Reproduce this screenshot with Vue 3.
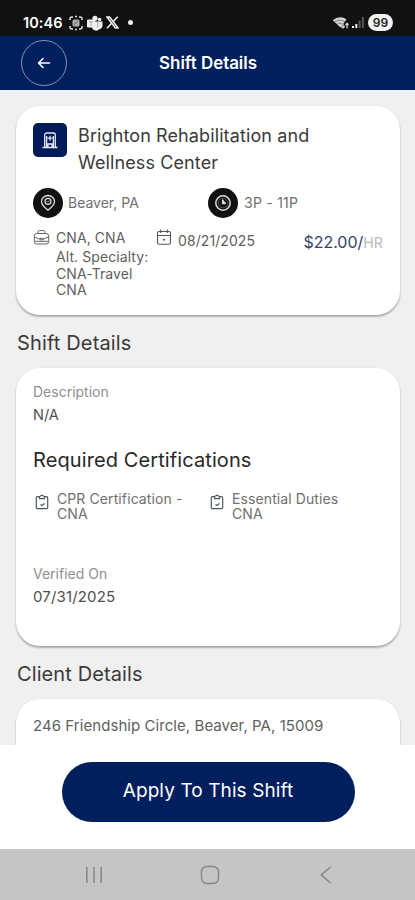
<script setup>
const certifications = [
  ['CPR Certification -', 'CNA'],
  ['Essential Duties', 'CNA']
]
</script>

<template>
  <div class="screen">
    <div class="status">
      <span class="time">10:46</span>
      <svg class="st-scan" width="16" height="16" viewBox="0 0 16 16" fill="none" stroke="#ddd" stroke-width="1.5">
        <path d="M2 5V4a2 2 0 0 1 2-2h1M11 2h1a2 2 0 0 1 2 2v1M14 11v1a2 2 0 0 1-2 2h-1M5 14H4a2 2 0 0 1-2-2v-1M7 1.5h2M7 14.5h2" />
        <rect x="4.5" y="4.5" width="7" height="7" rx="1.5" fill="#aaa" stroke="none" />
        <path d="M6.300 9.500 9.500 6.500" stroke="#555" stroke-width="1" />
      </svg>
      <svg class="st-teams" width="17" height="16" viewBox="0 0 17 16" fill="#eee">
        <circle cx="9" cy="3.300" r="2.600" /><circle cx="13.600" cy="4.500" r="1.800" />
        <path d="M6 6.500h10.500v4a4 4 0 0 1-3.200 3.800A4.500 4.500 0 0 1 6 13z" />
        <rect x="1" y="4.500" width="8" height="8" rx="1" />
        <path d="M3 6.800h4M5 6.800v4M11.600 7v5.500" stroke="#999" stroke-width=".8" />
      </svg>
      <svg class="st-x" width="13" height="13" viewBox="0 0 13 13" fill="none" stroke="#f2f2f2">
        <path d="M1 1h2.600L12 12H9.400z" stroke-width="1.500" /><path d="M11.700 .8 7.300 5.600M5.600 7.300 1 12.200" stroke-width="1.500" />
      </svg>
      <i class="st-dot"></i>
      <svg class="st-wifi" width="18" height="14" viewBox="0 0 18 14">
        <path d="M.8 4.300A12 12 0 0 1 14.500 3.200L8.500 11.500z" fill="#d5d5d5" />
        <path d="M3 5.600q5-3 9.500-.2M5.200 8.100q3-1.800 5.600 0" fill="none" stroke="#666" stroke-width=".8" />
        <path d="M11 12V7.500m-1.800 2.500 1.800 2 1.800-2M15 12.500V7.500m-1.500 1.500 1.500-1.700 1.500 1.700" fill="none" stroke="#ccc" stroke-width="1.300" />
      </svg>
      <svg class="st-signal" width="13" height="13" viewBox="0 0 13 13">
        <path d="M0 10h2v2H0zM3.300 8h2v4h-2z" fill="#eee" /><path d="M6.600 4.500h2V12h-2zM9.900 1h2v11h-2z" fill="#555" />
      </svg>
      <span class="battery">99</span>
    </div>

    <header class="bar">
      <div class="back">
        <svg width="14" height="12" viewBox="0 0 14 12" fill="none" stroke="#fff" stroke-width="1.600" stroke-linecap="round" stroke-linejoin="round"><path d="M12.500 6H1.700M6 1.500 1.500 6 6 10.500" /></svg>
      </div>
      <h1>Shift Details</h1>
    </header>

    <main class="content">
      <section class="card summary">
        <div class="facility">
          <div class="building">
            <svg width="18" height="18" viewBox="0 0 18 18" fill="none" stroke="#e6eaf5" stroke-width="1.300">
              <path d="M1.500 16.500h15M3.700 16V4a2 2 0 0 1 2-2h6.600a2 2 0 0 1 2 2v12M9 4.700v5M6.500 7.200h5M7 16v-3h4v3M5.600 5v11M12.400 5v11" />
            </svg>
          </div>
          <h2>Brighton Rehabilitation and<br />Wellness Center</h2>
        </div>
        <div class="facts">
          <div class="fact place">
            <div class="disc">
              <svg width="18" height="18" viewBox="0 0 18 18" fill="none" stroke="#ddd" stroke-width="1.300">
                <path d="M9 16.300C5.500 13.400 2.500 10.500 2.500 7.400a6.500 5.900 0 0 1 13 0C15.500 10.500 12.500 13.400 9 16.300z" /><circle cx="9" cy="7.300" r="3" /><path d="m7.700 7.200 1 1 1.700-1.800" stroke-width=".8" />
              </svg>
            </div>
            <span>Beaver, PA</span>
          </div>
          <div class="fact hours">
            <div class="disc">
              <svg width="18" height="18" viewBox="0 0 18 18" fill="none" stroke="#ddd" stroke-width="1.500"><circle cx="9" cy="9" r="7.200" /><circle cx="9" cy="9" r="4.800" stroke="#777" stroke-width=".6" /><path d="M8.700 5.500V9.500h3" /><path d="m9 6 3 3H9z" fill="#ddd" stroke="none" /></svg>
            </div>
            <span>3P - 11P</span>
          </div>
        </div>
        <div class="meta">
          <svg class="case" width="17" height="17" viewBox="0 0 17 17" fill="none" stroke="#666" stroke-width="1">
            <path d="M5 4.500V3.200A1.700 1.700 0 0 1 6.700 1.500h3.600A1.700 1.700 0 0 1 12 3.200v1.300" /><rect x="1.300" y="4.500" width="14.400" height="10.500" rx="2.400" /><path d="M1.500 8 7 10.200M15.500 8 10 10.200M7 9.300h3v1.500H7zM2 12.300h13" />
          </svg>
          <div class="spec">CNA, CNA<div class="alt">Alt. Specialty:<br />CNA-Travel<br />CNA</div></div>
          <svg class="cal" width="16" height="17" viewBox="0 0 16 17" fill="none" stroke="#555" stroke-width="1.100">
            <rect x="1.500" y="2.500" width="13" height="12.800" rx="1.800" /><path d="M1.500 6.500h13M4.700.6v3.300M11.300.6v3.300" /><path d="M7 10h2v1.500H7z" fill="#555" stroke="none" />
          </svg>
          <span class="date">08/21/2025</span>
          <span class="rate">$22.00/<span class="unit">HR</span></span>
        </div>
      </section>

      <h3>Shift Details</h3>

      <section class="card details">
        <div class="label">Description</div>
        <div class="value">N/A</div>
        <h4>Required Certifications</h4>
        <div class="certs">
          <div v-for="(c, i) in certifications" :key="i" class="cert">
            <svg width="14" height="16" viewBox="0 0 14 16" fill="none" stroke="#4c5964" stroke-width="1.200">
              <path d="M4.200 2.700H2.500A1.200 1.200 0 0 0 1.300 3.900v9.600a1.200 1.200 0 0 0 1.200 1.200h9a1.200 1.200 0 0 0 1.200-1.200V3.900a1.200 1.200 0 0 0-1.200-1.200H9.800" /><path d="M4.500 4.700V2.500l2.500-1.300 2.500 1.300v2.200z" /><path d="m5.500 10.500 1.400 1L9.600 9.500" />
            </svg>
            <div>{{ c[0] }}<br />{{ c[1] }}</div>
          </div>
        </div>
        <div class="label">Verified On</div>
        <div class="value verified">07/31/2025</div>
      </section>

      <h3 class="client">Client Details</h3>

      <section class="card address">246 Friendship Circle, Beaver, PA, 15009</section>
    </main>

    <footer class="action"><button>Apply To This Shift</button></footer>

    <nav class="nav">
      <svg width="18" height="18" viewBox="0 0 18 18" stroke="#858585" stroke-width="1.500"><path d="M1.800 1v16M9 1v16M16.200 1v16" /></svg>
      <svg width="20" height="20" viewBox="0 0 20 20" fill="none" stroke="#858585" stroke-width="1.400"><rect x="1.500" y="1.500" width="17" height="17" rx="5.500" /></svg>
      <svg width="18" height="18" viewBox="0 0 18 18" fill="none" stroke="#858585" stroke-width="1.500"><path d="M13.500 1 4.300 9l9.200 8" /></svg>
    </nav>
  </div>
</template>

<style>
body { margin: 0; background: #fff; }
</style>

<style scoped>
* { box-sizing: border-box; }
.screen { width: 415px; height: 900px; display: flex; flex-direction: column; overflow: hidden; font-family: Inter, Roboto, sans-serif; color: #444; white-space: nowrap; }
h1, h2, h3, h4 { margin: 0; font-weight: 400; }
svg { display: block; flex: none; }

.status { height: 36px; flex: none; background: #111; color: #fff; display: flex; align-items: center; padding: 9px 22px 0 23px; }
.time { font-size: 14.500px; font-weight: 600; width: 45px; letter-spacing: .05px; }
.st-teams { margin-left: 2px; }
.st-x { margin-left: 3px; }
.st-dot { width: 5px; height: 5px; border-radius: 50%; background: #eee; margin-left: 9px; }
.st-wifi { margin-left: auto; }
.st-signal { margin-left: 2px; }
.battery { width: 25px; height: 17px; border-radius: 9px; background: #f4f4f4; color: #222; font-size: 12px; font-weight: 600; line-height: 17px; text-align: center; margin-left: 3px; }

.bar { height: 54px; flex: none; background: #001f5c; color: #fff; display: grid; grid-template-columns: 67px 1fr 66px; align-items: center; }
.back { width: 46px; height: 46px; border: 1px solid #8390b7; border-radius: 50%; display: flex; align-items: center; justify-content: center; margin-left: 20.500px; }
.bar h1 { text-align: center; font-size: 17px; line-height: 24px; font-weight: 600; letter-spacing: -.05px; }

.content { height: 655px; flex: none; overflow: hidden; background: #f0f0f0; padding: 16px 15px 0 16px; }
.card { background: #fff; border-radius: 24px; box-shadow: 0 2px 2px rgba(0, 0, 0, .28), 0 0 2px rgba(0, 0, 0, .08); }

.summary { height: 209px; padding: 16px 17px 0; }
.facility { display: flex; gap: 11px; }
.building { width: 34px; height: 34px; margin-top: 1px; background: #001a5a; border-radius: 5px; display: flex; align-items: center; justify-content: center; }
.facility h2 { font-size: 18px; line-height: 27px; letter-spacing: .11px; color: #3a3a3a; }
.facts { display: flex; margin-top: 12px; }
.fact { display: flex; align-items: center; gap: 6px; font-size: 14px; line-height: 28px; color: #707070; }
.fact span { padding-bottom: 1px; }
.hours { letter-spacing: .25px; }
.place { width: 175px; gap: 5px; }
.disc { width: 30px; height: 30px; border-radius: 50%; background: #111; display: flex; align-items: center; justify-content: center; }
.meta { display: flex; margin-top: 11px; font-size: 14px; line-height: 16.300px; color: #606060; letter-spacing: .08px; }
.case { margin: 0 6px 0 0; }
.spec { width: 100px; padding-top: 1px; }
.alt { margin-top: 3px; }
.cal { margin-right: 6px; }
.date { padding-top: 4px; }
.rate { margin-left: auto; font-size: 16px; line-height: 20px; padding-top: 3px; color: #34426a; letter-spacing: 0; }
.unit { font-size: 14.200px; color: #bbb; }

h3 { font-size: 20px; line-height: 24px; letter-spacing: .15px; color: #3a3a3a; margin: 16px 0 13px 1px; }
.client { letter-spacing: .1px; }
.details { height: 278px; padding: 14px 17px 0; }
.label { font-size: 14px; line-height: 20px; color: #909090; }
.value { font-size: 14.500px; line-height: 20px; color: #505050; margin-top: 3px; }
.verified { font-size: 15px; letter-spacing: .15px; }
.details h4 { font-size: 20px; line-height: 24px; letter-spacing: .1px; color: #282828; margin-top: 23px; }
.certs { display: flex; margin-top: 19px; height: 73px; }
.cert { display: flex; width: 175px; padding-left: 2px; font-size: 14px; line-height: 15.300px; letter-spacing: .1px; color: #707070; }
.cert svg { margin: 3px 8px 0 0; }

.address { height: 120px; padding: 17px; font-size: 15px; line-height: 20px; letter-spacing: .06px; color: #606060; }

.action { height: 104px; flex: none; background: #fff; padding: 17px 60px 0 62px; }
.action button { display: block; width: 293px; height: 60px; border: 0; border-radius: 30px; background: #001f5c; color: #fff; font: 400 19px/58px Inter, Roboto, sans-serif; letter-spacing: .1px; padding: 0 1px 2px 0; text-align: center; }
.nav { height: 51px; flex: none; background: #c5c5c5; display: flex; align-items: center; justify-content: space-between; padding: 0 80px 0 85px; }
</style>
